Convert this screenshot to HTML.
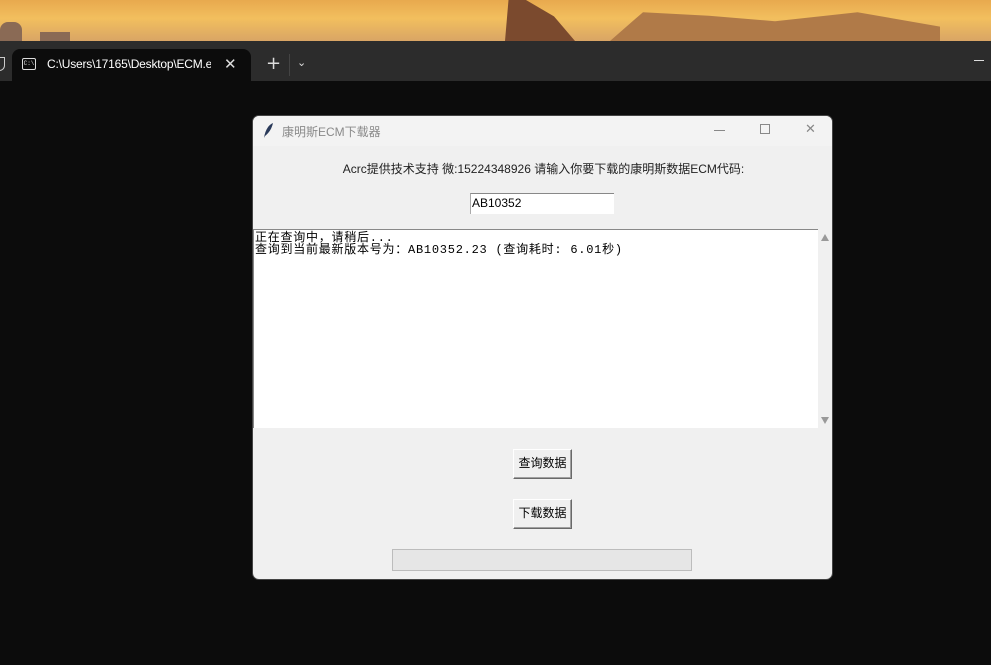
<!DOCTYPE html>
<html><head><meta charset="utf-8">
<style>
*{margin:0;padding:0;box-sizing:border-box}
body{width:991px;height:665px;overflow:hidden;background:#0c0c0c;position:relative;font-family:"Liberation Sans","Noto Sans CJK SC",sans-serif}
.sky{position:absolute;left:0;top:0;width:991px;height:41px;background:linear-gradient(180deg,#e8a94e 0%,#f2bf5e 45%,#d9a565 100%)}
.rock{position:absolute;background:#7a4a2c}
.tabbar{position:absolute;left:0;top:41px;width:991px;height:40px;background:#2c2c2c}
.tab{position:absolute;left:12px;top:49px;width:239px;height:32px;background:#0c0c0c;border-radius:8px 8px 0 0}
.win{position:absolute;left:252px;top:115px;width:581px;height:465px;background:#f0f0f0;border-radius:7px;border:1px solid #444;overflow:hidden}
.abs{position:absolute}
</style></head><body>
<div class="sky"></div>
<div class="rock" style="left:0;top:22px;width:22px;height:19px;border-radius:8px 8px 0 0;background:#8a6a55"></div>
<div class="rock" style="left:40px;top:32px;width:30px;height:9px;background:#8a6a55"></div>
<div class="rock" style="left:505px;top:0;width:70px;height:41px;clip-path:polygon(5% 0,30% 0,70% 40%,100% 100%,0 100%);background:#7b4a2e"></div>
<div class="rock" style="left:610px;top:5px;width:330px;height:36px;clip-path:polygon(0 100%,10% 20%,30% 30%,50% 45%,75% 20%,100% 60%,100% 100%);background:#b07a48"></div>
<div class="tabbar"></div>
<div class="tab"></div>
<div class="abs" style="left:-6px;top:57px;width:11px;height:14px;border:1.5px solid #ccc;border-radius:0 0 6px 6px"></div>
<div class="abs" style="left:22px;top:58px;width:14px;height:12px;border:1.3px solid #ddd;border-radius:2px;font:6px 'Liberation Mono';color:#ddd;line-height:8px;padding-top:1px;text-align:center">C:\</div>
<div class="abs" style="left:47px;top:57px;font:12px 'Liberation Sans';color:#fff;white-space:nowrap;letter-spacing:-0.2px;width:164px;overflow:hidden">C:\Users\17165\Desktop\ECM.exe</div>
<div class="abs" style="left:224px;top:55px;font:15px 'DejaVu Sans';color:#ddd">✕</div>
<div class="abs" style="left:266px;top:53px;font:18px 'DejaVu Sans';color:#ddd">+</div>
<div class="abs" style="left:289px;top:54px;width:1px;height:22px;background:#444"></div>
<div class="abs" style="left:297px;top:56px;font:11px 'DejaVu Sans';color:#ddd">⌄</div>
<div class="abs" style="left:974px;top:60px;width:10px;height:1px;background:#ddd"></div>

<div class="win">
  <div class="abs" style="left:0;top:0;width:581px;height:30px;background:#f3f3f3"></div>
  <svg class="abs" style="left:9px;top:6px" width="12" height="17" viewBox="0 0 12 17"><path d="M2 16 C3 9 6 3 11 1 C10 6 7 11 3 14 Z" fill="#2a3a5a"/></svg>
  <div class="abs" style="left:29px;top:7px;font-size:12px;color:#8a8a8a">康明斯ECM下载器</div>
  <div class="abs" style="left:461px;top:14px;width:11px;height:1px;background:#888"></div>
  <div class="abs" style="left:507px;top:8px;width:10px;height:10px;border:1px solid #888"></div>
  <div class="abs" style="left:552px;top:6px;font:13px 'DejaVu Sans';color:#888">✕</div>
  <div class="abs" style="left:0;top:44px;width:581px;text-align:center;font-size:12px;color:#222">Acrc提供技术支持 微:15224348926 请输入你要下载的康明斯数据ECM代码:</div>
  <div class="abs" style="left:217px;top:77px;width:144px;height:21px;background:#fff;border-top:1px solid #888;border-left:1px solid #aaa;font-size:12px;line-height:19px;padding-left:1px;color:#000">AB10352</div>
  <div class="abs" style="left:0;top:113px;width:565px;height:199px;background:#fff;border-top:1px solid #888;border-left:1px solid #888;font:12px/12px 'Liberation Mono','Noto Sans CJK SC',monospace;letter-spacing:0.75px;color:#000;padding:2px 0 0 1px;white-space:pre">正在查询中，请稍后...
查询到当前最新版本号为：AB10352.23 (查询耗时: 6.01秒)</div>
  <div class="abs" style="left:568px;top:118px;width:0;height:0;border-left:4px solid transparent;border-right:4px solid transparent;border-bottom:7px solid #999"></div>
  <div class="abs" style="left:568px;top:301px;width:0;height:0;border-left:4px solid transparent;border-right:4px solid transparent;border-top:7px solid #999"></div>
  <div class="abs" style="left:260px;top:333px;width:59px;height:30px;background:#f0f0f0;border:1px solid;border-color:#fff #696969 #696969 #fff;box-shadow:inset -1px -1px 0 #a0a0a0;font-size:12px;line-height:27px;text-align:center;color:#000">查询数据</div>
  <div class="abs" style="left:260px;top:383px;width:59px;height:30px;background:#f0f0f0;border:1px solid;border-color:#fff #696969 #696969 #fff;box-shadow:inset -1px -1px 0 #a0a0a0;font-size:12px;line-height:27px;text-align:center;color:#000">下载数据</div>
  <div class="abs" style="left:139px;top:433px;width:300px;height:22px;background:#e6e6e6;border:1px solid #bcbcbc"></div>
</div>
</body></html>
